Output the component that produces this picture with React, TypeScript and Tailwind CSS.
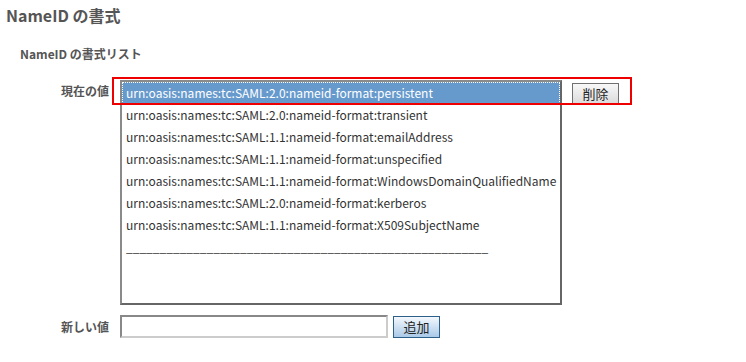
const FONT = "font-['Noto_Sans_CJK_JP','Noto_Sans',sans-serif]";

const FORMATS = [
  "urn:oasis:names:tc:SAML:2.0:nameid-format:persistent",
  "urn:oasis:names:tc:SAML:2.0:nameid-format:transient",
  "urn:oasis:names:tc:SAML:1.1:nameid-format:emailAddress",
  "urn:oasis:names:tc:SAML:1.1:nameid-format:unspecified",
  "urn:oasis:names:tc:SAML:1.1:nameid-format:WindowsDomainQualifiedName",
  "urn:oasis:names:tc:SAML:2.0:nameid-format:kerberos",
  "urn:oasis:names:tc:SAML:1.1:nameid-format:X509SubjectName",
  "______________________________________________________",
];

export default function App() {
  return (
    <div className={`${FONT} w-[746px] h-[362px] bg-white text-[#333] overflow-hidden`}>
      <h1 className="pl-[6px] pt-[3px] text-[16px] leading-[24px] font-bold text-[#555]">NameID の書式</h1>
      <h2 className="pl-[20px] mt-[17px] text-[12px] leading-[20px] font-bold text-[#555]">NameID の書式リスト</h2>

      <div className="relative flex mt-[16px]">
        <div className="w-[120px] pr-[11px] text-right text-[12px] leading-[20px] font-bold text-[#555] pt-[1px]">現在の値</div>
        <div className="w-[442px] h-[225px] border-2 border-[#8a8a8a] border-r-[#666] border-b-[#666] text-[12px]">
          {FORMATS.map((f, i) => (
            <div
              key={i}
              className={`h-[22px] leading-[22px] pl-[4px] whitespace-nowrap ${
                i === 0 ? "bg-[#6699cc] text-white outline-1 outline-dotted outline-white -outline-offset-1" : ""
              }`}
            >
              {f}
            </div>
          ))}
        </div>
        <div className="pl-[10px]">
          <button className="w-[47px] h-[21px] border border-[#707070] bg-gradient-to-b from-[#f8f8f8] to-[#dcdcdc] text-[13px] leading-[19px] text-[#222]">
            削除
          </button>
        </div>
        <div className="absolute left-[112px] top-[-3px] w-[520px] h-[28px] border-2 border-[#ee0000] pointer-events-none" />
      </div>

      <div className="flex items-center mt-[10px]">
        <div className="w-[120px] pr-[11px] text-right text-[12px] font-bold text-[#555]">新しい値</div>
        <input className="w-[268px] h-[23px] border-2 border-[#888] border-r-[#ccc] border-b-[#ccc] bg-white outline-none" />
        <button className="ml-[5px] w-[47px] h-[22px] border border-[#2d5f8b] bg-gradient-to-b from-[#f4f8fc] to-[#a9c9e8] text-[13px] leading-[19px] text-[#222]">
          追加
        </button>
      </div>
    </div>
  );
}
